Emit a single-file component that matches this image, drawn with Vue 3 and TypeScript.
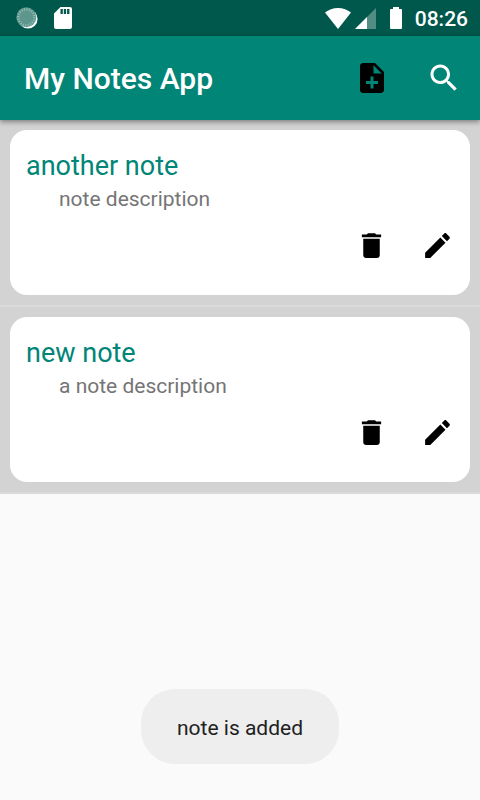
<script setup lang="ts">
import { ref } from 'vue'

interface Note {
  id: number
  title: string
  description: string
}

const notes = ref<Note[]>([
  { id: 1, title: 'another note', description: 'note description' },
  { id: 2, title: 'new note', description: 'a note description' },
])
const toast = ref('note is added')

function removeNote(id: number) {
  notes.value = notes.value.filter((note) => note.id !== id)
}
</script>

<template>
  <div class="screen">
    <div class="status-bar">
      <div class="status-group left">
        <svg class="spinner" viewBox="0 0 22 22" aria-hidden="true">
          <circle cx="12" cy="12" r="9.600" fill="#fff" />
          <circle cx="10.300" cy="10.300" r="10" fill="#5c968d" />
          <circle cx="10.300" cy="10.300" r="8" fill="none" stroke="#98bdb7" stroke-width="2.500" stroke-dasharray="1 1.513" />
        </svg>
        <svg class="sd" viewBox="0 0 18 22" aria-hidden="true">
          <path fill="#fff" fill-rule="evenodd" d="M6.500 0H16q2 0 2 2v18q0 2-2 2H2q-2 0-2-2V6.500zM6.500 2v5h2.300V2zm3.300 0v5h2.300V2zm3.300 0v5h2.300V2z" />
        </svg>
      </div>
      <div class="status-group right">
        <svg class="wifi" viewBox="0 0 26 21" aria-hidden="true">
          <path fill="#fff" d="M13 21 0 4.600C3.500 1.700 8 0 13 0s9.500 1.700 13 4.600z" />
        </svg>
        <svg class="signal" viewBox="0 0 21 21" aria-hidden="true">
          <path fill="#fff" fill-opacity=".32" d="M21 0v21H0z" />
          <path fill="#fff" d="M12 9v12H0z" />
        </svg>
        <svg class="battery" viewBox="0 0 12 22" aria-hidden="true">
          <path fill="#fff" d="M3 0h6v2h2q1 0 1 1v18q0 1-1 1H1q-1 0-1-1V3q0-1 1-1h2z" />
        </svg>
        <time class="clock">08:26</time>
      </div>
    </div>

    <header class="app-bar">
      <h1>My Notes App</h1>
      <button type="button" class="bar-button" aria-label="Add note">
        <svg viewBox="0 0 24 24">
          <path d="M14 2H6c-1.100 0-1.990.9-1.990 2L4 20c0 1.100.89 2 1.990 2H18c1.100 0 2-.9 2-2V8l-6-6zm2 14h-3v3h-2v-3H8v-2h3v-3h2v3h3v2zm-3-7V3.500L18.500 9H13z" />
        </svg>
      </button>
      <button type="button" class="bar-button light" aria-label="Search">
        <svg viewBox="0 0 24 24">
          <path d="M15.500 14h-.79l-.28-.27C15.410 12.590 16 11.110 16 9.500 16 5.910 13.090 3 9.500 3S3 5.910 3 9.500 5.910 16 9.500 16c1.610 0 3.090-.59 4.230-1.570l.27.28v.79l5 4.990L20.490 19l-4.990-5zm-6 0C7.010 14 5 11.990 5 9.500S7.010 5 9.500 5 14 7.010 14 9.500 11.990 14 9.500 14z" />
        </svg>
      </button>
    </header>

    <ul class="notes">
      <li v-for="note in notes" :key="note.id" class="note-row">
        <article class="card">
          <h2>{{ note.title }}</h2>
          <p>{{ note.description }}</p>
          <div class="actions">
            <button type="button" aria-label="Delete note" @click="removeNote(note.id)">
              <svg viewBox="0 0 24 24">
                <path d="M6 19c0 1.100.9 2 2 2h8c1.100 0 2-.9 2-2V7H6v12zM19 4h-3.500l-1-1h-5l-1 1H5v2h14V4z" />
              </svg>
            </button>
            <button type="button" aria-label="Edit note">
              <svg viewBox="0 0 24 24">
                <path d="M3 17.250V21h3.750L17.810 9.940l-3.750-3.750L3 17.250zM20.710 7.040c.39-.39.39-1.020 0-1.410l-2.340-2.340c-.39-.39-1.020-.39-1.410 0l-1.830 1.830 3.750 3.750 1.830-1.830z" />
              </svg>
            </button>
          </div>
        </article>
      </li>
    </ul>

    <div class="toast" role="status">{{ toast }}</div>
  </div>
</template>

<style>
body {
  margin: 0;
  background: #fafafa;
}
</style>

<style scoped>
.screen {
  min-height: 100vh;
  font-family: Roboto, 'Liberation Sans', sans-serif;
  background: #fafafa;
}

svg {
  display: block;
}

button {
  margin: 0;
  padding: 0;
  border: 0;
  background: none;
  color: #000;
  cursor: pointer;
}

button svg {
  width: 100%;
  height: 100%;
  fill: currentColor;
}

.status-bar {
  display: flex;
  justify-content: space-between;
  height: 36px;
  padding: 0 12px 0 16px;
  background: #00574b;
}

.status-group {
  display: flex;
  align-items: center;
}

.left {
  gap: 16px;
}

.spinner {
  width: 22px;
  height: 22px;
}

.sd {
  width: 18px;
  height: 22px;
}

.wifi {
  width: 26px;
  height: 21px;
  margin-right: 4px;
}

.signal {
  width: 21px;
  height: 21px;
  margin-right: 14px;
}

.battery {
  width: 12px;
  height: 22px;
  margin-right: 13px;
}

.clock {
  padding-top: 2px;
  color: #fff;
  font-size: 21px;
  font-weight: 500;
  line-height: 34px;
}

.app-bar {
  position: relative;
  display: flex;
  align-items: center;
  height: 84px;
  padding: 0 18px 0 24px;
  gap: 36px;
  background: #008577;
  box-shadow: 0 2px 5px rgba(0, 0, 0, 0.4);
}

.app-bar h1 {
  flex: 1;
  margin: 0;
  padding-top: 2px;
  color: #fff;
  font-size: 30px;
  font-weight: 500;
  line-height: 36px;
}

.bar-button {
  width: 36px;
  height: 36px;
}

.light {
  color: #fff;
}

.notes {
  margin: 0;
  padding: 0;
  list-style: none;
}

.note-row {
  padding: 10px;
  background: #d3d3d3;
  border-bottom: 2px solid #dadada;
}

.card {
  padding: 16px 16px 33px;
  border-radius: 17px;
  background: #fff;
}

.card h2 {
  margin: 0;
  color: #008577;
  font-size: 27px;
  font-weight: 400;
  line-height: 40px;
}

.card p {
  margin: 0 0 17px;
  padding-left: 33px;
  color: #757575;
  font-size: 21px;
  line-height: 26px;
}

.actions {
  display: flex;
  justify-content: flex-end;
  gap: 33px;
}

.actions button {
  width: 33px;
  height: 33px;
}

.toast {
  position: fixed;
  bottom: 36px;
  left: 50%;
  padding: 26px 36px 22px;
  border-radius: 34px;
  background: #eee;
  color: #212121;
  font-size: 21px;
  line-height: 27px;
  white-space: nowrap;
  transform: translateX(-50%);
}
</style>
